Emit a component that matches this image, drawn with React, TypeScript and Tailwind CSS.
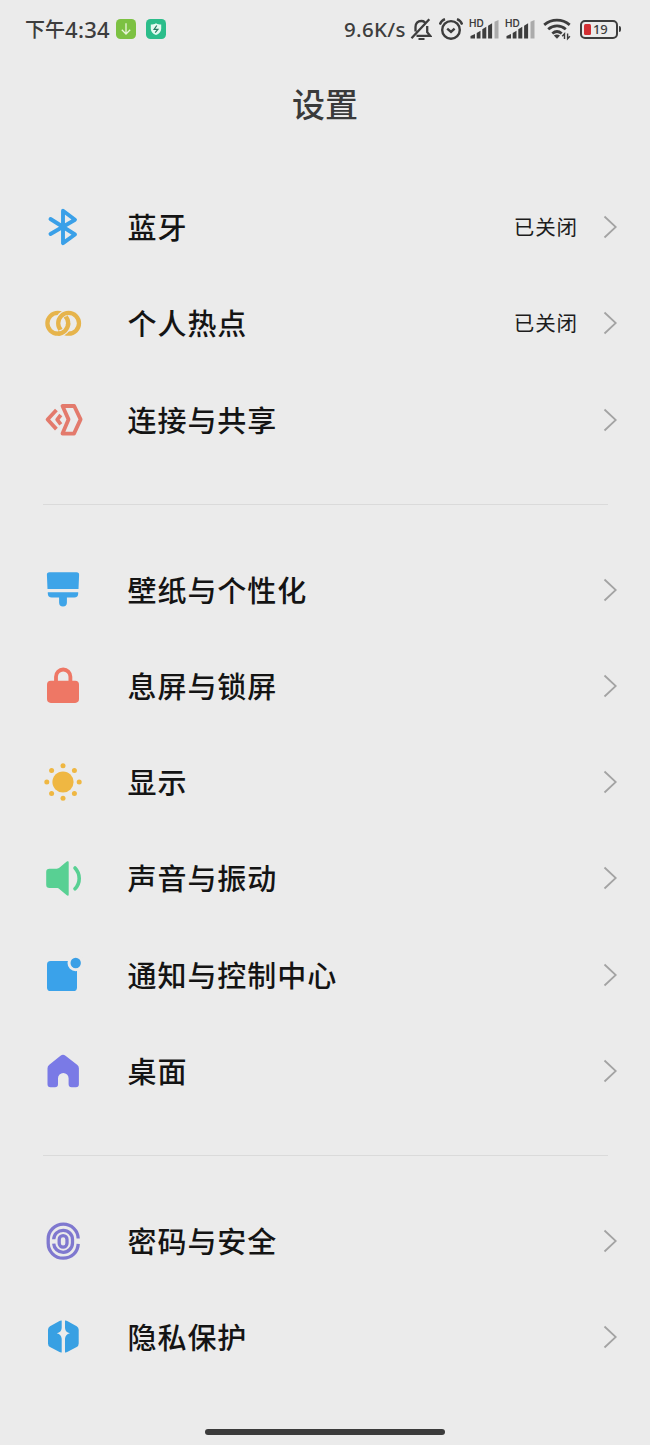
import React from 'react';

type IconProps = { children: React.ReactNode };

const Glyph: React.FC<IconProps> = ({ children }) => (
    <svg viewBox="0 0 44 44" className="w-11 h-11 shrink-0" fill="none">
        {children}
    </svg>
);

const BluetoothIcon = () => (
    <Glyph>
        <path d="M9.500 14 34 29.500 22 38.200V5.700L34 14.700 9.500 29" stroke="#3aa0e8" strokeWidth="3.900" strokeLinecap="round" strokeLinejoin="round" />
    </Glyph>
);

const HotspotIcon = () => (
    <Glyph>
        <circle cx="16.800" cy="22.300" r="10.400" stroke="#e6b44c" strokeWidth="4.300" />
        <path d="M17 20.500A10.600 10.600 0 0 1 25.700 11.900" stroke="#ebebeb" strokeWidth="6.400" />
        <circle cx="27.600" cy="22.300" r="10.400" stroke="#e6b44c" strokeWidth="4.300" />
        {/* left ring passes over the right one at the lower crossing */}
        <path d="M27.100 24.100A10.400 10.400 0 0 1 18.700 32.500" stroke="#ebebeb" strokeWidth="6.400" />
        <path d="M27.200 22.300A10.400 10.400 0 0 1 16.800 32.700" stroke="#e6b44c" strokeWidth="4.300" />
    </Glyph>
);

const ShareIcon = () => (
    <Glyph>
        <g stroke="#e37a6c" strokeWidth="3.800" strokeLinejoin="round">
            <path d="M21.500 8h11.700l6.400 13.400-6.600 14.200H21.500l6-14.200z" />
            <path d="m15.400 12-8.800 9.500 8.800 9.600M19.800 17l-3.600 4.700 3.600 4.700" />
        </g>
    </Glyph>
);

const BrushIcon = () => (
    <Glyph>
        <path d="M8.500 4.300h27a2.600 2.600 0 0 1 2.600 2.800L37.500 21h-31L5.900 7.100a2.600 2.600 0 0 1 2.600-2.800zM6.800 24.200h30.400v1.300a4 4 0 0 1-4 4h-7.300v5a3.900 3.900 0 0 1-7.800 0v-5h-7.300a4 4 0 0 1-4-4z" fill="#3ea4e8" />
    </Glyph>
);

const LockIcon = () => (
    <Glyph>
        <path d="M15 19v-6.300a7.200 7.200 0 0 1 14.400 0V19" stroke="#ee7765" strokeWidth="3.800" />
        <rect x="6" y="16.700" width="32" height="22.200" rx="3.800" fill="#ee7765" />
    </Glyph>
);

const SunIcon = () => (
    <Glyph>
        <g fill="#efb742">
            <circle cx="22" cy="22" r="10.600" />
            <circle cx="22" cy="5.800" r="2.500" />
            <circle cx="22" cy="38.200" r="2.500" />
            <circle cx="5.800" cy="22" r="2.500" />
            <circle cx="38.200" cy="22" r="2.500" />
            <circle cx="10.600" cy="10.600" r="2.500" />
            <circle cx="33.400" cy="10.600" r="2.500" />
            <circle cx="10.600" cy="33.400" r="2.500" />
            <circle cx="33.400" cy="33.400" r="2.500" />
        </g>
    </Glyph>
);

const SoundIcon = () => (
    <Glyph>
        <g transform="translate(0 .7)">
            <path d="M8.500 12h7.200c1.300 0 2-.4 2.900-1.100l7.200-6c1-.9 1.900-.4 1.900.8v32c0 1.200-.9 1.700-1.900.8l-7.200-6c-.9-.7-1.600-1.100-2.900-1.100H8.500A3.300 3.300 0 0 1 5.200 28.100V15.300A3.300 3.300 0 0 1 8.500 12z" fill="#58d093" />
            <path d="M34 11.300c5.600 6 5.600 15 0 20.800" stroke="#58d093" strokeWidth="3.600" strokeLinecap="round" />
        </g>
    </Glyph>
);

const NotifyIcon = () => (
    <Glyph>
        <rect x="6" y="8" width="30" height="30" rx="3.600" fill="#3aa2ea" />
        <circle cx="34.700" cy="10" r="8.200" fill="#ebebeb" />
        <circle cx="34.700" cy="10" r="5.200" fill="#3a9fe6" />
    </Glyph>
);

const HomeIcon = () => (
    <Glyph>
        <path d="M19.500 6.700a4 4 0 0 1 5 0l11.600 9a4.500 4.500 0 0 1 1.800 3.600v16a3 3 0 0 1-3 3h-4.300a3 3 0 0 1-3-3v-6.100a5.300 5.300 0 0 0-10.600 0v6.100a3 3 0 0 1-3 3H9.500a3 3 0 0 1-3-3v-16a4.500 4.500 0 0 1 1.800-3.600z" fill="#7a7ae6" />
    </Glyph>
);

const FingerprintIcon = () => (
    <Glyph>
        <g stroke="#7f78cf" strokeWidth="3.300">
            <path d="M37.200 19.500C37 11.500 30.500 5.200 22.300 5.200S7.200 11.800 7.200 20v4.300c0 8.200 6.600 14.900 15 14.900s14.700-6 15-14.300" />
            <path d="M12.700 20.300c.2-5.200 4.300-9 9.500-9s9.300 4.100 9.300 9.200v3.400c0 5.100-4.200 9.400-9.300 9.400s-9.200-3.900-9.500-8.700" />
            <rect x="18.200" y="16.600" width="7.800" height="11.600" rx="3.900" />
        </g>
    </Glyph>
);

const PrivacyIcon = () => (
    <Glyph>
        <path d="M20.700 5.700v7.200c-.3 2.800-1.700 4.600-4.900 5.400 3.200.8 4.600 2.500 4.900 5.400v13.800c-.8.200-1.500 0-2.200-.4L9 31.900a4 4 0 0 1-2-3.500V14.700a4 4 0 0 1 2-3.400l9.500-5.200c.7-.4 1.400-.6 2.200-.4zM24 5.700v7.200c.3 2.800 1.700 4.600 4.900 5.400-3.200.8-4.600 2.500-4.900 5.400v13.800c.8.200 1.500 0 2.200-.4l9.500-5.200a4 4 0 0 0 2-3.500V14.700a4 4 0 0 0-2-3.400l-9.500-5.200c-.7-.4-1.400-.6-2.200-.4z" fill="#38a0e3" />
    </Glyph>
);

const SignalIcon = () => (
    <div className="w-[30px] h-6 relative">
        <span className="absolute left-0 top-px text-[10px] leading-[10px] font-semibold font-['Inter']">HD</span>
        <svg viewBox="0 0 30 24" className="w-[30px] h-6">
            <path d="M1.500 19 6 17v4.500H1.500zM7.700 16l3.800-2.200v7.700H7.700zM13.300 12.300l4-2.500v11.700h-4zM19.100 8.800l4-2.500v15.200h-4z" fill="#3d3d3d" />
            <path d="M25.500 4.800 29.500 3v18.500h-4z" fill="#ababab" />
        </svg>
    </div>
);

const StatusBar = () => (
    <header className="flex items-center h-[58px] pl-[25px] pr-[29px] text-[#3d3d3d]">
        <span className="w-[91px] flex items-center whitespace-nowrap font-medium text-[20px]">
            下午
            <span className="pt-px text-[22px] tracking-[0.300px] font-['Noto_Sans']">4:34</span>
        </span>
        <svg viewBox="0 0 20 20" className="w-5 h-5" fill="none">
            <rect width="20" height="20" rx="4.500" fill="#7cc142" />
            <path d="M10 4.300v10.400M5.800 10.800l4.200 4.200 4.200-4.200" stroke="#e9f5d9" strokeWidth="1.300" />
        </svg>
        <svg viewBox="0 0 20 20" className="w-5 h-5 ml-2.5" fill="none">
            <rect width="20" height="20" rx="4.500" fill="#2bbd8a" />
            <path d="M10 4.200c1.700 1 3.400 1.300 5.200 1.300v4.300c0 3-2 5-5.200 6.200-3.200-1.200-5.200-3.200-5.200-6.200V5.500c1.800 0 3.500-.3 5.200-1.300z" fill="#e4faf0" />
            <path d="m10.800 6.500-2.700 3.900h3.800l-2.700 3.300" stroke="#277a60" strokeWidth="1.200" />
        </svg>

        <span className="ml-auto w-[67px] pt-px text-[20.500px] font-medium whitespace-nowrap font-['Noto_Sans'] tracking-[0.300px]">9.6K/s</span>
        <svg viewBox="0 0 22 24" className="w-[22px] h-6 -ml-px" fill="none" stroke="#3d3d3d">
            <path d="M1.500 21.200 19.300 2.300M5.500 14.500V10c0-3.600 2.200-6 5.800-6 1.400 0 2.500.4 3.600 1.200M17.200 9v6.200l2.900 3.600H6.500" strokeWidth="2.300" />
            <path d="M8.500 22h6" strokeWidth="2" />
        </svg>
        <svg viewBox="0 0 24 24" className="w-6 h-6 ml-[7px]" fill="none" stroke="#3d3d3d" strokeWidth="2.400">
            <circle cx="12" cy="12.900" r="8.800" />
            <path d="M8.200 11.700 12 15l3.600-3.300M.8 7.600C1.700 4.900 3.400 3 6 2.100M23.200 7.600C22.300 4.900 20.600 3 18 2.100" />
        </svg>
        <div className="ml-[6px] flex gap-[6px]">
            <SignalIcon />
            <SignalIcon />
        </div>
        <svg viewBox="0 0 28 24" className="w-7 h-6 ml-[8px]" fill="none" stroke="#3d3d3d" strokeWidth="2.800">
            <path d="M1.200 7.900c7.600-6.300 17.900-6.300 25.500 0M5.200 12.300c5.300-4.500 12.300-4.500 17.600 0M9.300 16.500c2.900-2.400 6.500-2.400 9.400 0" />
            <path d="m10.800 18.500 3.200 3.300 3-3.300c-1.800-1.300-4.400-1.300-6.200 0z" fill="#3d3d3d" stroke="none" />
            <path d="M21.500 22v-5.200l-2.300 2.500M24.600 16.500v5.200l2.300-2.500" strokeWidth="1.400" />
        </svg>
        <div className="ml-[9px] w-[38px] h-[19px] shrink-0 border-2 border-[#3d3d3d] rounded-[5px] flex items-center pl-[2px]">
            <span className="w-[7px] h-[11px] rounded-[1.500px] bg-[#d32f33]" />
            <span className="ml-[2px] text-[13px] leading-[14px] font-['Noto_Sans'] font-medium tracking-[-0.300px]">19</span>
        </div>
        <span className="ml-px w-[2px] h-[6px] shrink-0 bg-[#3d3d3d] rounded-r-sm" />
    </header>
);

const groups = [
    [
        { label: '蓝牙', icon: BluetoothIcon, value: '已关闭' },
        { label: '个人热点', icon: HotspotIcon, value: '已关闭' },
        { label: '连接与共享', icon: ShareIcon },
    ],
    [
        { label: '壁纸与个性化', icon: BrushIcon },
        { label: '息屏与锁屏', icon: LockIcon },
        { label: '显示', icon: SunIcon },
        { label: '声音与振动', icon: SoundIcon },
        { label: '通知与控制中心', icon: NotifyIcon },
        { label: '桌面', icon: HomeIcon },
    ],
    [
        { label: '密码与安全', icon: FingerprintIcon },
        { label: '隐私保护', icon: PrivacyIcon },
    ],
];

const App: React.FC = () => {
    return (
        <div className="w-[650px] h-[1445px] overflow-hidden bg-[#ebebeb] flex flex-col font-['Noto_Sans_CJK_SC',sans-serif]">
            <StatusBar />
            <h1 className="h-[94px] text-center text-[33px] leading-[91px] font-medium text-[#3a3a3a]">设置</h1>

            <main className="mt-[27px]">
                {groups.map((rows, i) => (
                    <section key={i}>
                        {i > 0 && <div className="h-px bg-[#dadada] ml-[43px] mr-[42px] mt-[36px] mb-[36.500px]" />}
                        {rows.map((row: any) => (
                            <div key={row.label} className="flex items-center h-[96.300px] pl-[41px] pr-[33px]">
                                <row.icon />
                                <span className="ml-[42.500px] pb-[2px] text-[29px] leading-10 font-medium tracking-[0.950px] text-[#141414]">{row.label}</span>
                                {row.value && (
                                    <span className="ml-auto pb-[2px] text-[20.500px] leading-8 tracking-[0.900px] text-[#1c1c1c]">{row.value}</span>
                                )}
                                <svg viewBox="0 0 16 24" className={`w-4 h-6 ${row.value ? 'ml-[23px]' : 'ml-auto'}`} fill="none">
                                    <path d="m3.500 1.500 11.300 10.500L3.500 22.500" stroke="#a3a3a3" strokeWidth="1.800" />
                                </svg>
                            </div>
                        ))}
                    </section>
                ))}
            </main>

            {/* Home gesture bar */}
            <div className="mt-auto mb-[10px] mx-auto w-[240px] h-[6px] rounded-full bg-[#3b3b3b]" />
        </div>
    );
};

export default App;
